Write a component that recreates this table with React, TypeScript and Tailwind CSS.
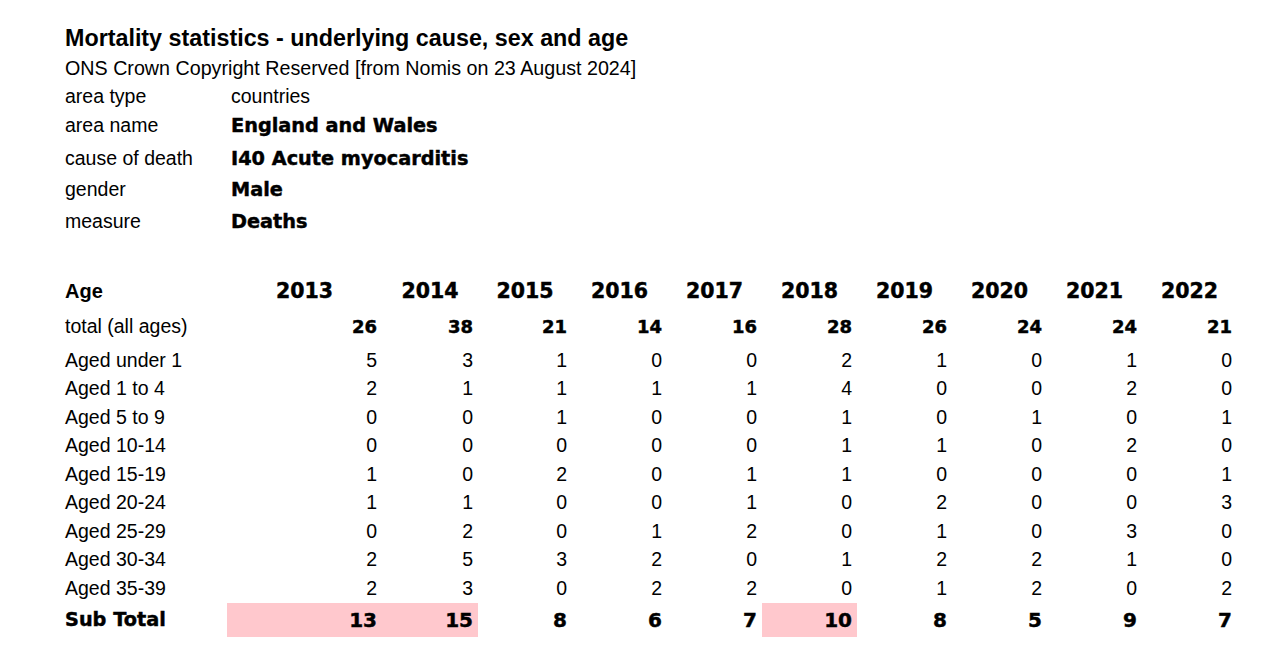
import React from "react";

const years = [2013, 2014, 2015, 2016, 2017, 2018, 2019, 2020, 2021, 2022];
const totals = [26, 38, 21, 14, 16, 28, 26, 24, 24, 21];
const rows: [string, number[]][] = [
  ["Aged under 1", [5, 3, 1, 0, 0, 2, 1, 0, 1, 0]],
  ["Aged 1 to 4", [2, 1, 1, 1, 1, 4, 0, 0, 2, 0]],
  ["Aged 5 to 9", [0, 0, 1, 0, 0, 1, 0, 1, 0, 1]],
  ["Aged 10-14", [0, 0, 0, 0, 0, 1, 1, 0, 2, 0]],
  ["Aged 15-19", [1, 0, 2, 0, 1, 1, 0, 0, 0, 1]],
  ["Aged 20-24", [1, 1, 0, 0, 1, 0, 2, 0, 0, 3]],
  ["Aged 25-29", [0, 2, 0, 1, 2, 0, 1, 0, 3, 0]],
  ["Aged 30-34", [2, 5, 3, 2, 0, 1, 2, 2, 1, 0]],
  ["Aged 35-39", [2, 3, 0, 2, 2, 0, 1, 2, 0, 2]],
];
const subTotals = [13, 15, 8, 6, 7, 10, 8, 5, 9, 7];
const pink = [0, 1, 5];

const grid =
  "grid grid-cols-[162px_155px_96px_94px_95px_95px_95px_95px_95px_95px_95px]";
const sans = "font-['Liberation_Sans',Arial,sans-serif]";
const heavy =
  "font-['DejaVu_Sans',sans-serif] font-bold [-webkit-text-stroke:0.45px_black]";

export default function App() {
  const meta: [string, string, boolean, string][] = [
    ["area type", "countries", false, "h-[26px]"],
    ["area name", "England and Wales", true, "h-[32px]"],
    ["cause of death", "I40 Acute myocarditis", true, "h-[34px]"],
    ["gender", "Male", true, "h-[28px]"],
    ["measure", "Deaths", true, "h-[36px]"],
  ];
  return (
    <div className={`w-[1280px] h-[659px] bg-white text-black overflow-hidden pl-[65px] pt-[23px] ${sans}`}>
      <div className="h-[31px] flex items-center text-[23.3px] font-bold leading-none whitespace-nowrap">
        Mortality statistics - underlying cause, sex and age
      </div>
      <div className="h-[30px] flex items-center text-[19.7px] leading-none whitespace-nowrap">
        ONS Crown Copyright Reserved [from Nomis on 23 August 2024]
      </div>
      {meta.map(([k, v, b, h]) => (
        <div key={k} className={`${h} flex items-center leading-none whitespace-nowrap`}>
          <div className="w-[166px] text-[19.5px]">{k}</div>
          <div className={b ? `${heavy} text-[19.3px]` : "text-[19.5px]"}>{v}</div>
        </div>
      ))}

      <div className="mt-[34px]">
        <div className={`${grid} h-[34px] items-center leading-none`}>
          <div className="text-[20px] font-bold">Age</div>
          {years.map((y) => (
            <div key={y} className={`${heavy} text-[20.5px] text-center`}>
              {y}
            </div>
          ))}
        </div>
        <div className={`${grid} h-[38px] items-center leading-none`}>
          <div className="text-[19.5px] whitespace-nowrap">total (all ages)</div>
          {totals.map((t, i) => (
            <div key={i} className={`${heavy} text-[18px] text-right pr-[5px]`}>
              {t}
            </div>
          ))}
        </div>
        {rows.map(([label, vals]) => (
          <div key={label} className={`${grid} h-[28.5px] items-center leading-none`}>
            <div className="text-[19.5px] whitespace-nowrap">{label}</div>
            {vals.map((v, i) => (
              <div key={i} className="text-[19.5px] text-right pr-[5px]">
                {v}
              </div>
            ))}
          </div>
        ))}
        <div className={`${grid} h-[34px] leading-none`}>
          <div className={`${heavy} text-[19.3px] flex items-center whitespace-nowrap`}>Sub Total</div>
          {subTotals.map((v, i) => (
            <div
              key={i}
              className={`${heavy} text-[20px] flex items-center justify-end pr-[5px] ${
                pink.includes(i) ? "bg-[#ffc8cd]" : ""
              }`}
            >
              {v}
            </div>
          ))}
        </div>
      </div>
    </div>
  );
}
